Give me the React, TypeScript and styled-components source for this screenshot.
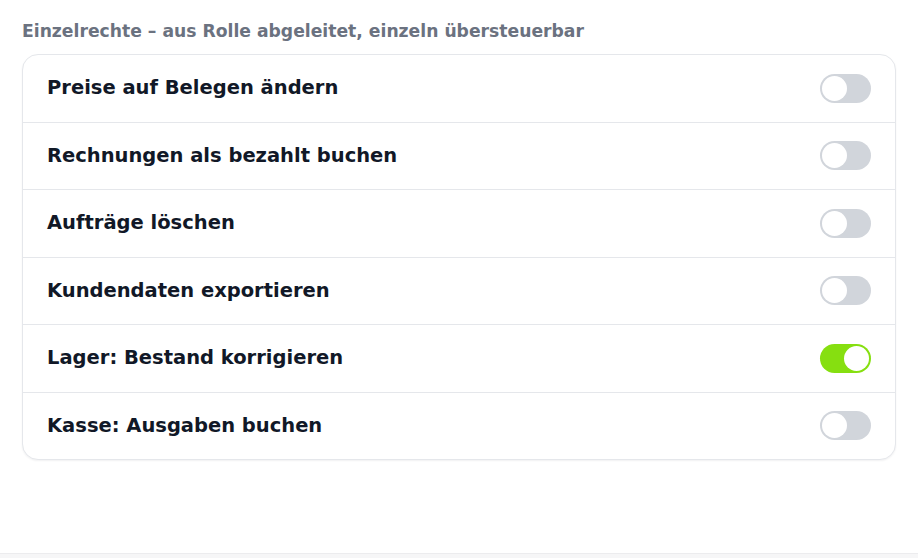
import { useState } from 'react';
import styled, { createGlobalStyle } from 'styled-components';

interface Permission {
  id: string;
  label: string;
  enabled: boolean;
}

const initialPermissions: Permission[] = [
  { id: 'prices', label: 'Preise auf Belegen ändern', enabled: false },
  { id: 'paid', label: 'Rechnungen als bezahlt buchen', enabled: false },
  { id: 'orders', label: 'Aufträge löschen', enabled: false },
  { id: 'export', label: 'Kundendaten exportieren', enabled: false },
  { id: 'stock', label: 'Lager: Bestand korrigieren', enabled: true },
  { id: 'cash', label: 'Kasse: Ausgaben buchen', enabled: false }
];

const App: React.FC = () => {
  const [permissions, setPermissions] = useState(initialPermissions);

  const toggle = (id: string) => {
    setPermissions((list) =>
      list.map((p) => (p.id === id ? { ...p, enabled: !p.enabled } : p))
    );
  };

  return (
    <>
      <GlobalStyle />
      <Page>
        <Section>
          <SectionTitle>Einzelrechte – aus Rolle abgeleitet, einzeln übersteuerbar</SectionTitle>
          <Card>
            {permissions.map((perm) => (
              <Row key={perm.id}>
                <Label>{perm.label}</Label>
                <Switch
                  type="button"
                  role="switch"
                  aria-checked={perm.enabled}
                  aria-label={perm.label}
                  $on={perm.enabled}
                  onClick={() => toggle(perm.id)}
                >
                  <Knob $on={perm.enabled} />
                </Switch>
              </Row>
            ))}
          </Card>
        </Section>
        <NextSection />
      </Page>
    </>
  );
};

const GlobalStyle = createGlobalStyle`
  html, body {
    margin: 0;
    padding: 0;
    background: #ffffff;
  }

  body {
    font-family: "DejaVu Sans", Verdana, sans-serif;
  }
`;

const Page = styled.div`
  height: 558px;
  display: flex;
  flex-direction: column;
  overflow: hidden;
`;

const Section = styled.section`
  flex: 1;
  padding: 20px 22px 0 22px;
`;

const SectionTitle = styled.h3`
  margin: 0 0 12px 0;
  font-size: 17.2px;
  line-height: 22px;
  font-weight: 700;
  color: #6b7280;
`;

const Card = styled.div`
  border: 1px solid #e5e7eb;
  border-radius: 16px;
  background: #ffffff;
  box-shadow: 0 1px 2px rgba(17, 24, 39, 0.06);
  overflow: hidden;
`;

const Row = styled.div`
  display: flex;
  align-items: center;
  justify-content: space-between;
  padding: 18.75px 24px;
  min-height: 29px;

  & + & {
    border-top: 1px solid #e5e7eb;
  }
`;

const Label = styled.span`
  font-size: 19.5px;
  line-height: 24px;
  font-weight: 700;
  color: #111827;
`;

const Switch = styled.button<{ $on: boolean }>`
  width: 51px;
  height: 29px;
  padding: 2px;
  border: none;
  border-radius: 999px;
  background: ${({ $on }) => ($on ? '#86df10' : '#d1d5db')};
  display: flex;
  align-items: center;
  cursor: pointer;
  transition: background 0.2s ease;
`;

const Knob = styled.span<{ $on: boolean }>`
  width: 25px;
  height: 25px;
  border-radius: 50%;
  background: #ffffff;
  transform: translateX(${({ $on }) => ($on ? '22px' : '0')});
  transition: transform 0.2s ease;
`;

const NextSection = styled.div`
  height: 4px;
  border-top: 1px solid #ececee;
  background: #f6f6f7;
`;

export default App;
